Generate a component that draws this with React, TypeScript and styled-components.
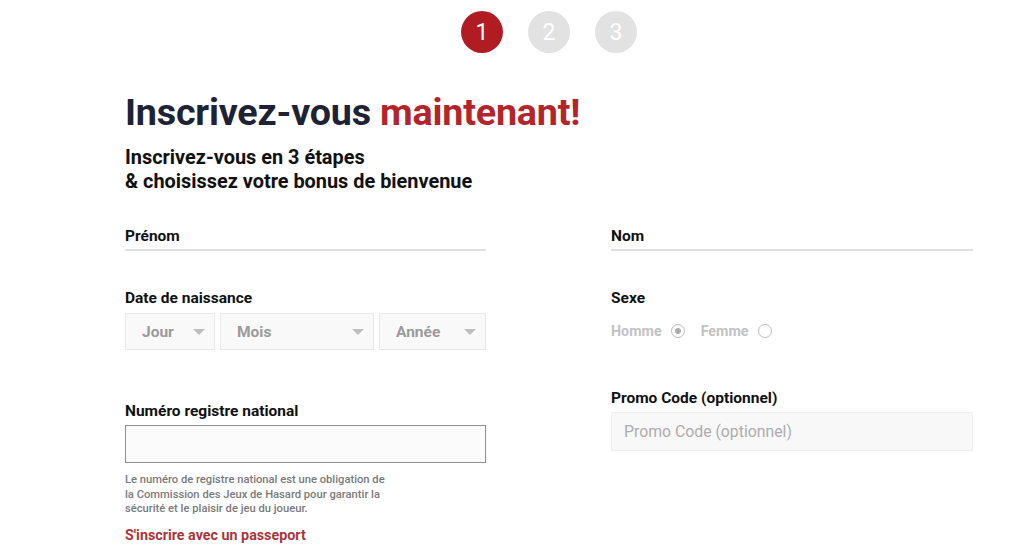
import { FC } from 'react';
import styled, { createGlobalStyle } from 'styled-components';

const GlobalStyle = createGlobalStyle`
  html, body {
    margin: 0;
    padding: 0;
    background: #ffffff;
    font-family: Roboto, "Liberation Sans", Arial, sans-serif;
    color: #111111;
  }
  * {
    box-sizing: border-box;
  }
`;

const Page = styled.div`
  width: 1024px;
  height: 560px;
  overflow: hidden;
  padding-top: 11px;
`;

const Container = styled.div`
  margin-left: 125px;
  width: 848px;
`;

const Steps = styled.div`
  display: flex;
  justify-content: center;
  gap: 25px;
`;

const StepCircle = styled.div<{ $active?: boolean }>`
  width: 42px;
  height: 42px;
  border-radius: 50%;
  display: flex;
  align-items: center;
  justify-content: center;
  background: ${p => (p.$active ? '#b01c22' : '#e2e2e2')};
  color: #ffffff;
  font-size: 23px;
  font-weight: 400;
`;

const Heading = styled.h1`
  margin: 37px 0 0;
  font-size: 37.7px;
  line-height: 44px;
  font-weight: 700;
  color: #1d2335;
  letter-spacing: -0.2px;
`;

const Accent = styled.span`
  color: #b3252a;
`;

const Subtitle = styled.p`
  margin: 12px 0 0;
  font-size: 19.9px;
  line-height: 24px;
  font-weight: 700;
  color: #111111;
`;

const Columns = styled.div`
  display: grid;
  grid-template-columns: 361px 362px;
  column-gap: 125px;
  margin-top: 33px;
  align-items: start;
`;

const Column = styled.div`
  display: flex;
  flex-direction: column;
`;

const Field = styled.div<{ $mt?: number }>`
  display: flex;
  flex-direction: column;
  margin-top: ${p => p.$mt ?? 0}px;
`;

const Label = styled.label`
  font-size: 15.5px;
  line-height: 18px;
  font-weight: 700;
  color: #111111;
`;

const LineInput = styled.input`
  border: none;
  border-bottom: 2px solid #e0e0e0;
  height: 6px;
  padding: 0;
  outline: none;
  background: transparent;
`;

const DateRow = styled.div`
  display: grid;
  grid-template-columns: 90px 154px 107px;
  gap: 5px;
  margin-top: 6px;
`;

const SelectBox = styled.div`
  height: 37px;
  display: flex;
  align-items: center;
  justify-content: space-between;
  padding: 0 9px 0 16px;
  background: #f9f9f9;
  border: 1px solid #e9e9e9;
  font-size: 15.5px;
  font-weight: 700;
  color: #9b9b9b;
`;

const Caret = styled.span`
  width: 0;
  height: 0;
  border-left: 6px solid transparent;
  border-right: 6px solid transparent;
  border-top: 6px solid #bdbdbd;
`;

const RadioRow = styled.div`
  display: flex;
  align-items: center;
  gap: 16px;
  margin-top: 14px;
  height: 20px;
`;

const RadioOption = styled.span`
  display: inline-flex;
  align-items: center;
  gap: 9px;
  font-size: 14.3px;
  font-weight: 700;
  color: #c2c2c2;
`;

const RadioRing = styled.span<{ $checked?: boolean }>`
  width: 14px;
  height: 14px;
  border-radius: 50%;
  border: 1.5px solid #bdbdbd;
  display: inline-flex;
  align-items: center;
  justify-content: center;

  &::after {
    content: '';
    width: 6px;
    height: 6px;
    border-radius: 50%;
    background: ${p => (p.$checked ? '#adadad' : 'transparent')};
  }
`;

const BoxInput = styled.input<{ $strong?: boolean }>`
  height: ${p => (p.$strong ? 38 : 39)}px;
  margin-top: 5px;
  padding: 0 12px;
  border: 1px solid ${p => (p.$strong ? '#8f8f8f' : '#efefef')};
  background: ${p => (p.$strong ? '#fbfbfb' : '#f8f8f8')};
  font-family: Roboto, "Liberation Sans", Arial, sans-serif;
  font-size: 15.8px;
  color: #333;
  outline: none;

  &::placeholder {
    color: #adadad;
  }
`;

const HelpText = styled.p`
  margin: 10px 0 0;
  width: 268px;
  font-size: 11.2px;
  line-height: 14.5px;
  font-weight: 500;
  color: #7a7a7a;
`;

const PassportLink = styled.a`
  margin-top: 10px;
  font-size: 14.3px;
  line-height: 17px;
  font-weight: 700;
  color: #a9363a;
  text-decoration: none;
  cursor: pointer;
`;

const App: FC = () => {
  return (
    <Page>
      <GlobalStyle />
      <Container>
        <Steps>
          <StepCircle $active>1</StepCircle>
          <StepCircle>2</StepCircle>
          <StepCircle>3</StepCircle>
        </Steps>

        <Heading>
          Inscrivez-vous <Accent>maintenant!</Accent>
        </Heading>
        <Subtitle>
          Inscrivez-vous en 3 étapes
          <br />& choisissez votre bonus de bienvenue
        </Subtitle>

        <Columns>
          <Column>
            <Field>
              <Label>Prénom</Label>
              <LineInput type="text" />
            </Field>

            <Field $mt={38}>
              <Label>Date de naissance</Label>
              <DateRow>
                <SelectBox>
                  Jour <Caret />
                </SelectBox>
                <SelectBox>
                  Mois <Caret />
                </SelectBox>
                <SelectBox>
                  Année <Caret />
                </SelectBox>
              </DateRow>
            </Field>

            <Field $mt={52}>
              <Label>Numéro registre national</Label>
              <BoxInput type="text" $strong />
              <HelpText>
                Le numéro de registre national est une obligation de la Commission des Jeux de
                Hasard pour garantir la sécurité et le plaisir de jeu du joueur.
              </HelpText>
              <PassportLink>S'inscrire avec un passeport</PassportLink>
            </Field>
          </Column>

          <Column>
            <Field>
              <Label>Nom</Label>
              <LineInput type="text" />
            </Field>

            <Field $mt={38}>
              <Label>Sexe</Label>
              <RadioRow>
                <RadioOption>
                  Homme <RadioRing $checked />
                </RadioOption>
                <RadioOption>
                  Femme <RadioRing />
                </RadioOption>
              </RadioRow>
            </Field>

            <Field $mt={48}>
              <Label>Promo Code (optionnel)</Label>
              <BoxInput type="text" placeholder="Promo Code (optionnel)" />
            </Field>
          </Column>
        </Columns>
      </Container>
    </Page>
  );
};

export default App;
